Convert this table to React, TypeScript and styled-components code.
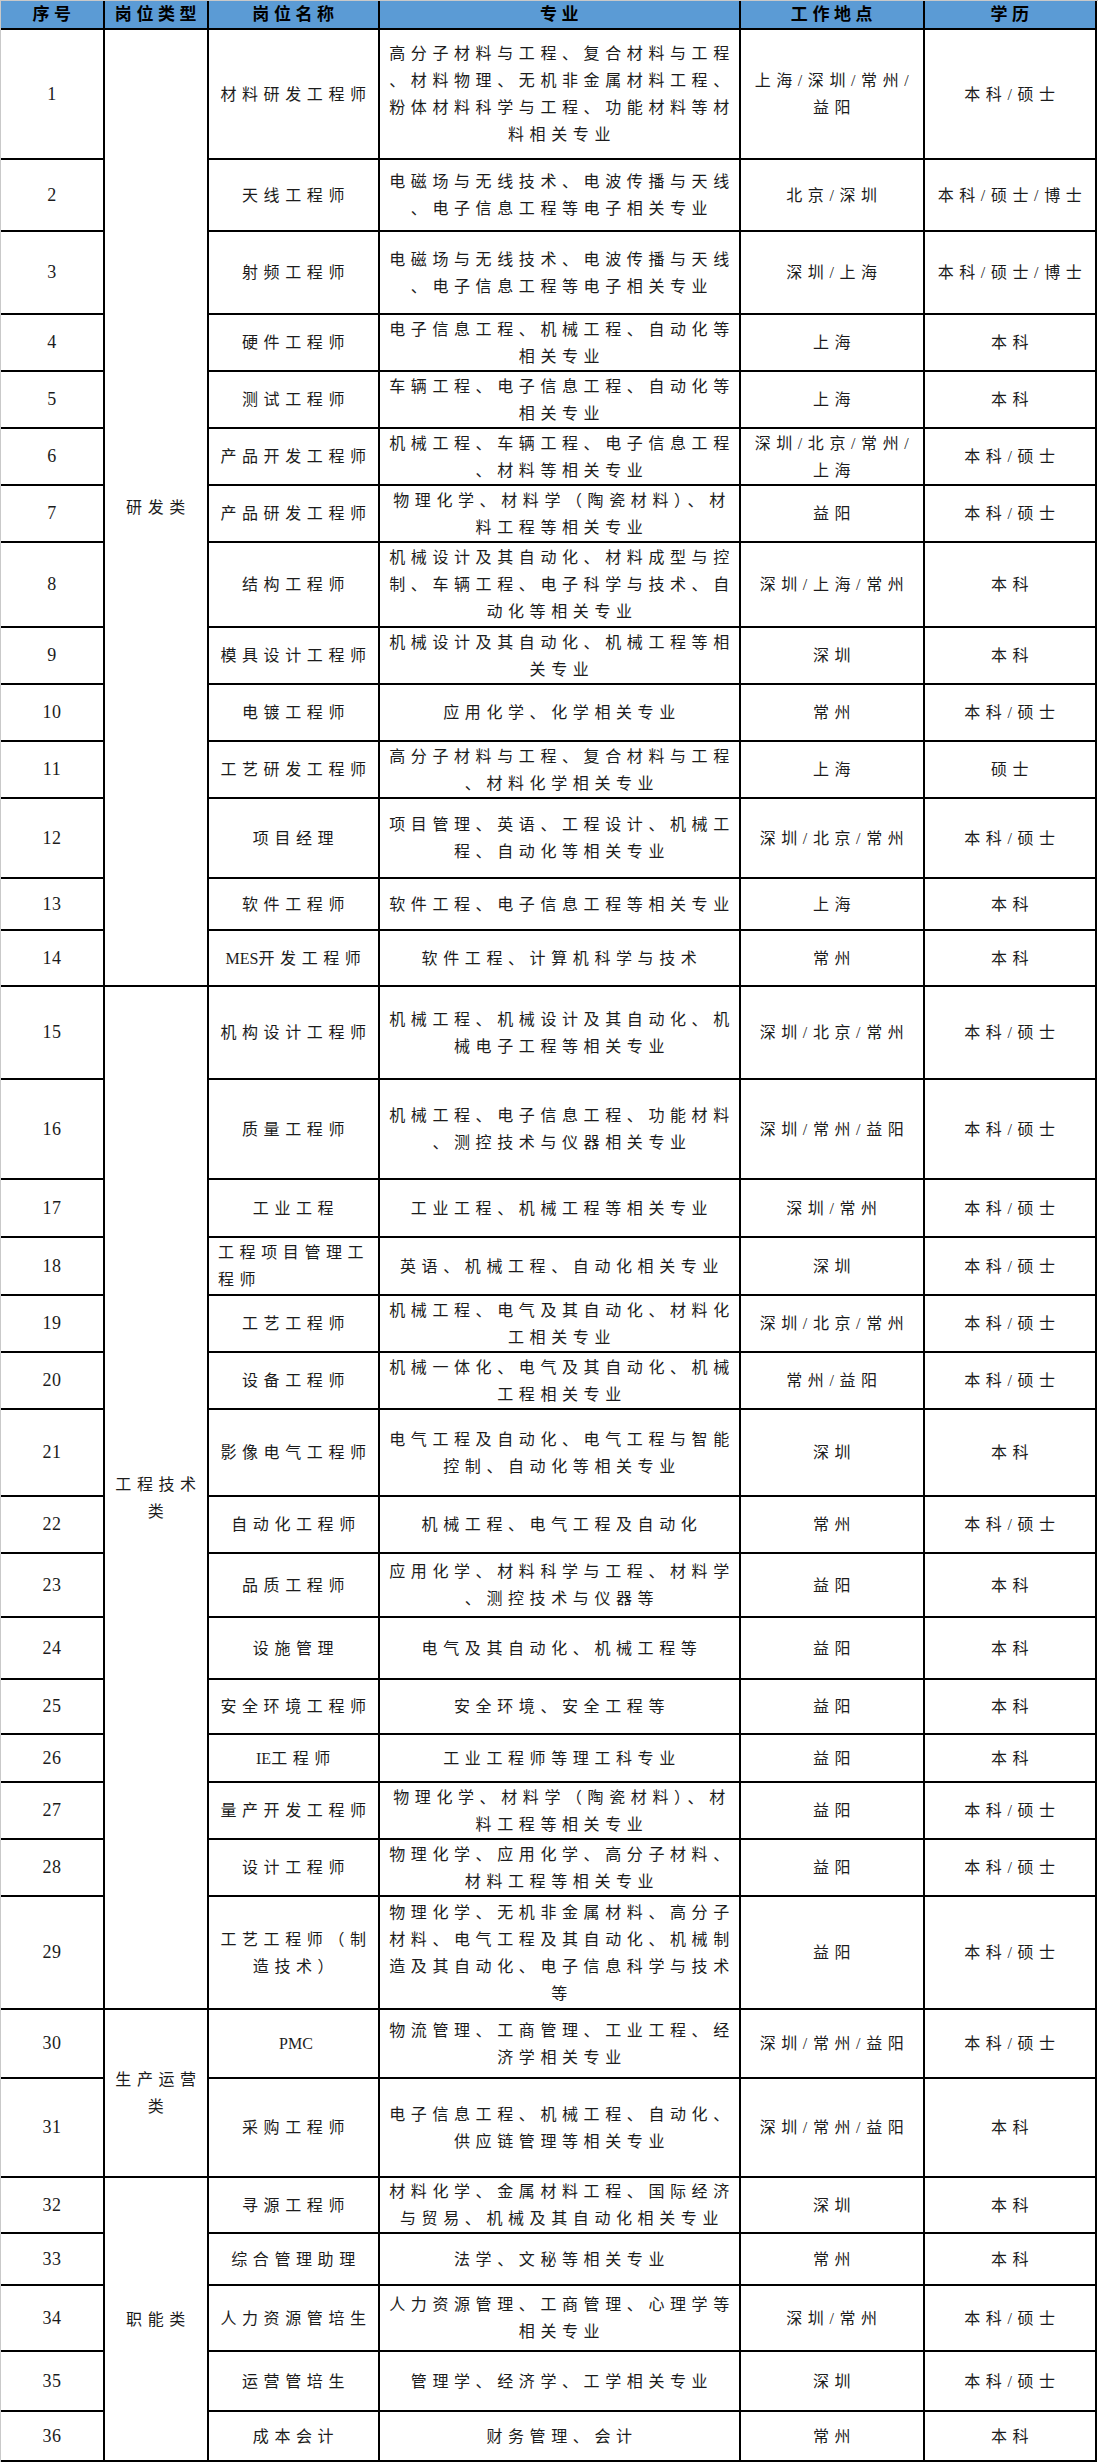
import React from 'react';
import styled, { createGlobalStyle } from 'styled-components';

type Job = {
  no: number;
  name: string[];
  major: string[];
  place: string[];
  degree: string;
  nameLeft?: boolean;
};

type Group = { label: string[]; jobs: Job[] };

const groups: Group[] = [
  {
    label: ['研发类'],
    jobs: [
      { no: 1, name: ['材料研发工程师'], major: ['高分子材料与工程、复合材料与工程', '、材料物理、无机非金属材料工程、', '粉体材料科学与工程、功能材料等材', '料相关专业'], place: ['上海/深圳/常州/', '益阳'], degree: '本科/硕士' },
      { no: 2, name: ['天线工程师'], major: ['电磁场与无线技术、电波传播与天线', '、电子信息工程等电子相关专业'], place: ['北京/深圳'], degree: '本科/硕士/博士' },
      { no: 3, name: ['射频工程师'], major: ['电磁场与无线技术、电波传播与天线', '、电子信息工程等电子相关专业'], place: ['深圳/上海'], degree: '本科/硕士/博士' },
      { no: 4, name: ['硬件工程师'], major: ['电子信息工程、机械工程、自动化等', '相关专业'], place: ['上海'], degree: '本科' },
      { no: 5, name: ['测试工程师'], major: ['车辆工程、电子信息工程、自动化等', '相关专业'], place: ['上海'], degree: '本科' },
      { no: 6, name: ['产品开发工程师'], major: ['机械工程、车辆工程、电子信息工程', '、材料等相关专业'], place: ['深圳/北京/常州/', '上海'], degree: '本科/硕士' },
      { no: 7, name: ['产品研发工程师'], major: ['物理化学、材料学（陶瓷材料）、材', '料工程等相关专业'], place: ['益阳'], degree: '本科/硕士' },
      { no: 8, name: ['结构工程师'], major: ['机械设计及其自动化、材料成型与控', '制、车辆工程、电子科学与技术、自', '动化等相关专业'], place: ['深圳/上海/常州'], degree: '本科' },
      { no: 9, name: ['模具设计工程师'], major: ['机械设计及其自动化、机械工程等相', '关专业'], place: ['深圳'], degree: '本科' },
      { no: 10, name: ['电镀工程师'], major: ['应用化学、化学相关专业'], place: ['常州'], degree: '本科/硕士' },
      { no: 11, name: ['工艺研发工程师'], major: ['高分子材料与工程、复合材料与工程', '、材料化学相关专业'], place: ['上海'], degree: '硕士' },
      { no: 12, name: ['项目经理'], major: ['项目管理、英语、工程设计、机械工', '程、自动化等相关专业'], place: ['深圳/北京/常州'], degree: '本科/硕士' },
      { no: 13, name: ['软件工程师'], major: ['软件工程、电子信息工程等相关专业'], place: ['上海'], degree: '本科' },
      { no: 14, name: ['MES开发工程师'], major: ['软件工程、计算机科学与技术'], place: ['常州'], degree: '本科' },
    ],
  },
  {
    label: ['工程技术', '类'],
    jobs: [
      { no: 15, name: ['机构设计工程师'], major: ['机械工程、机械设计及其自动化、机', '械电子工程等相关专业'], place: ['深圳/北京/常州'], degree: '本科/硕士' },
      { no: 16, name: ['质量工程师'], major: ['机械工程、电子信息工程、功能材料', '、测控技术与仪器相关专业'], place: ['深圳/常州/益阳'], degree: '本科/硕士' },
      { no: 17, name: ['工业工程'], major: ['工业工程、机械工程等相关专业'], place: ['深圳/常州'], degree: '本科/硕士' },
      { no: 18, name: ['工程项目管理工', '程师'], major: ['英语、机械工程、自动化相关专业'], place: ['深圳'], degree: '本科/硕士', nameLeft: true },
      { no: 19, name: ['工艺工程师'], major: ['机械工程、电气及其自动化、材料化', '工相关专业'], place: ['深圳/北京/常州'], degree: '本科/硕士' },
      { no: 20, name: ['设备工程师'], major: ['机械一体化、电气及其自动化、机械', '工程相关专业'], place: ['常州/益阳'], degree: '本科/硕士' },
      { no: 21, name: ['影像电气工程师'], major: ['电气工程及自动化、电气工程与智能', '控制、自动化等相关专业'], place: ['深圳'], degree: '本科' },
      { no: 22, name: ['自动化工程师'], major: ['机械工程、电气工程及自动化'], place: ['常州'], degree: '本科/硕士' },
      { no: 23, name: ['品质工程师'], major: ['应用化学、材料科学与工程、材料学', '、测控技术与仪器等'], place: ['益阳'], degree: '本科' },
      { no: 24, name: ['设施管理'], major: ['电气及其自动化、机械工程等'], place: ['益阳'], degree: '本科' },
      { no: 25, name: ['安全环境工程师'], major: ['安全环境、安全工程等'], place: ['益阳'], degree: '本科' },
      { no: 26, name: ['IE工程师'], major: ['工业工程师等理工科专业'], place: ['益阳'], degree: '本科' },
      { no: 27, name: ['量产开发工程师'], major: ['物理化学、材料学（陶瓷材料）、材', '料工程等相关专业'], place: ['益阳'], degree: '本科/硕士' },
      { no: 28, name: ['设计工程师'], major: ['物理化学、应用化学、高分子材料、', '材料工程等相关专业'], place: ['益阳'], degree: '本科/硕士' },
      { no: 29, name: ['工艺工程师（制', '造技术）'], major: ['物理化学、无机非金属材料、高分子', '材料、电气工程及其自动化、机械制', '造及其自动化、电子信息科学与技术', '等'], place: ['益阳'], degree: '本科/硕士' },
    ],
  },
  {
    label: ['生产运营', '类'],
    jobs: [
      { no: 30, name: ['PMC'], major: ['物流管理、工商管理、工业工程、经', '济学相关专业'], place: ['深圳/常州/益阳'], degree: '本科/硕士' },
      { no: 31, name: ['采购工程师'], major: ['电子信息工程、机械工程、自动化、', '供应链管理等相关专业'], place: ['深圳/常州/益阳'], degree: '本科' },
    ],
  },
  {
    label: ['职能类'],
    jobs: [
      { no: 32, name: ['寻源工程师'], major: ['材料化学、金属材料工程、国际经济', '与贸易、机械及其自动化相关专业'], place: ['深圳'], degree: '本科' },
      { no: 33, name: ['综合管理助理'], major: ['法学、文秘等相关专业'], place: ['常州'], degree: '本科' },
      { no: 34, name: ['人力资源管培生'], major: ['人力资源管理、工商管理、心理学等', '相关专业'], place: ['深圳/常州'], degree: '本科/硕士' },
      { no: 35, name: ['运营管培生'], major: ['管理学、经济学、工学相关专业'], place: ['深圳'], degree: '本科/硕士' },
      { no: 36, name: ['成本会计'], major: ['财务管理、会计'], place: ['常州'], degree: '本科' },
    ],
  },
];

// row heights measured from the sheet (bottom border included)
const rowHeights = [
  130, 72, 83, 57, 57, 57, 57, 85, 57, 57, 57, 80, 52, 56,
  93, 100, 58, 58, 57, 57, 87, 57, 64, 62, 55, 48, 57, 57, 113,
  69, 99,
  56, 52, 66, 60, 50,
];

const headers = ['序号', '岗位类型', '岗位名称', '专业', '工作地点', '学历'];

const GlobalStyle = createGlobalStyle`
  html, body {
    margin: 0;
    padding: 0;
    background: #ffffff;
  }
  body {
    font-family: "Liberation Serif", "Noto Sans CJK SC", serif;
    color: #1c1c1c;
  }
`;

const Sheet = styled.div`
  width: 1098px;
  border-top: 1px solid #c9c9c9;
  border-left: 1px solid #c9c9c9;
  box-sizing: border-box;
`;

const Grid = styled.div<{ $rows: number[] }>`
  display: grid;
  grid-template-columns: 104px 104px 171px 361px 184px 172px;
  grid-template-rows: 29px ${(p) => p.$rows.map((h) => `${h}px`).join(' ')};
`;

const Cell = styled.div`
  box-sizing: border-box;
  border-right: 2px solid #000;
  border-bottom: 2px solid #000;
  display: flex;
  flex-direction: column;
  align-items: center;
  justify-content: center;
  text-align: center;
  font-size: 16px;
  line-height: 27px;
  letter-spacing: 5.6px;
  padding-left: 5px;
  white-space: nowrap;
  overflow: hidden;
`;

const HeadCell = styled(Cell)`
  background: #5b9bd5;
  color: #000;
  font-size: 17px;
  font-weight: 700;
  line-height: 26px;
  letter-spacing: 4.6px;
  padding-left: 4px;
`;

const NoCell = styled(Cell)`
  font-size: 18px;
  letter-spacing: 0.5px;
  padding-left: 0;
`;

const NameBlock = styled.div<{ $left?: boolean }>`
  display: flex;
  flex-direction: column;
  align-items: ${(p) => (p.$left ? 'flex-start' : 'center')};
  align-self: ${(p) => (p.$left ? 'flex-start' : 'center')};
  padding-left: ${(p) => (p.$left ? '4px' : '0')};
`;

const Line = styled.span`
  display: block;
`;

const Latin = styled.span`
  letter-spacing: 0;
  font-size: 16px;
`;

function withLatin(text: string) {
  return text.split(/([A-Za-z0-9]+)/).map((part, i) =>
    /^[A-Za-z0-9]+$/.test(part) ? <Latin key={i}>{part}</Latin> : part
  );
}

const Lines = ({ lines }: { lines: string[] }) => (
  <>
    {lines.map((l, i) => (
      <Line key={i}>{withLatin(l)}</Line>
    ))}
  </>
);

export default function App() {
  return (
    <>
      <GlobalStyle />
      <Sheet>
        <Grid $rows={rowHeights}>
          {headers.map((h) => (
            <HeadCell key={h}>{h}</HeadCell>
          ))}
          {groups.map((g) =>
            g.jobs.map((job, idx) => (
              <React.Fragment key={job.no}>
                <NoCell>{job.no}</NoCell>
                {idx === 0 && (
                  <Cell style={{ gridRow: `span ${g.jobs.length}` }}>
                    <Lines lines={g.label} />
                  </Cell>
                )}
                <Cell>
                  <NameBlock $left={job.nameLeft}>
                    <Lines lines={job.name} />
                  </NameBlock>
                </Cell>
                <Cell>
                  <Lines lines={job.major} />
                </Cell>
                <Cell>
                  <Lines lines={job.place} />
                </Cell>
                <Cell>{job.degree}</Cell>
              </React.Fragment>
            ))
          )}
        </Grid>
      </Sheet>
    </>
  );
}
